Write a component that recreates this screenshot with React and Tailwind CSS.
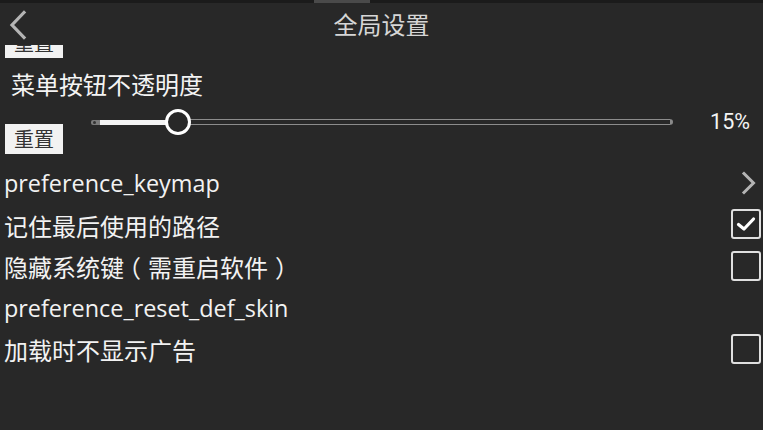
import React from "react";

const font = { fontFamily: '"Open Sans", "Noto Sans CJK SC", sans-serif' };
const cjk = { fontFamily: '"Noto Sans CJK SC", sans-serif' };

function Checkbox({ checked }) {
  return (
    <div className="w-[30px] h-[30px] border-2 border-[#e0e0e0] rounded-[3px] flex items-center justify-center -mt-[4px]">
      {checked && (
        <svg width="20" height="16" viewBox="0 0 20 16">
          <path d="M2.5 8.5 L8 13 L17.5 3" fill="none" stroke="#ffffff" strokeWidth="3.2" strokeLinecap="round" strokeLinejoin="round" />
        </svg>
      )}
    </div>
  );
}

function Row({ label, right, zh }) {
  return (
    <div className="h-[41.5px] flex items-center justify-between pl-[4px] pr-[2px]">
      {zh ? (
        <span className="text-[24px] text-[#f2f2f2] leading-none whitespace-nowrap -mt-[1px]" style={cjk}>{label}</span>
      ) : (
        <span className="text-[23.4px] text-[#f2f2f2] leading-none whitespace-nowrap -mt-[2px]">{label}</span>
      )}
      {right}
    </div>
  );
}

export default function App() {
  return (
    <div className="w-[763px] h-[430px] bg-[#282828] overflow-hidden flex flex-col" style={font}>
      <div className="h-[3px] bg-[#1b1b1b] flex">
        <div className="ml-[314px] w-[56px] h-[3px] bg-[#4a4a4a]" />
      </div>
      <div className="h-[42px] relative flex items-center justify-center">
        <svg className="absolute left-[8px] top-[7px]" width="20" height="30" viewBox="0 0 20 30">
          <path d="M16 2.5 L4 15 L16 27.5" fill="none" stroke="#b4b4b4" strokeWidth="3.2" strokeLinecap="square" />
        </svg>
        <span className="text-[24px] text-[#d6d6d6] leading-none" style={cjk}>全局设置</span>
      </div>
      <div className="h-[13px] overflow-hidden flex items-end pl-[5px]">
        <div className="w-[58px] h-[30px] shrink-0 bg-[#f2f2f2] flex items-center justify-center text-[20px] text-[#333] leading-none" style={cjk}>重置</div>
      </div>
      <div className="h-[50px] flex items-center pl-[11px]">
        <span className="text-[24px] text-[#f4f4f4] leading-none mt-[2px]" style={cjk}>菜单按钮不透明度</span>
      </div>
      <div className="flex items-start pl-[5px]">
        <div className="w-[58px] h-[30px] shrink-0 mt-[16px] bg-[#f2f2f2] flex items-center justify-center text-[20px] text-[#333] leading-none" style={cjk}>重置</div>
        <div className="ml-[28px] w-[582px] h-[28px] relative flex items-center">
          <div className="w-[9px] h-[5px] bg-[#7a7a7a] rounded-l-[2px] flex items-center pl-[2px]">
            <div className="w-[3px] h-[3px] bg-[#333] rounded-full" />
          </div>
          <div className="w-[78px] h-[5px] bg-[#f4f4f4]" />
          <div className="flex-1 h-[6px] border-y border-[#8c8c8c] rounded-r-[3px] border-r-[3px] border-r-[#8a8a8a]" />
          <div className="absolute left-[74px] top-[1px] w-[26px] h-[26px] rounded-full border-[3px] border-white bg-[#282828]" />
        </div>
        <div className="ml-auto pr-[13px] h-[28px] flex items-center">
          <span className="text-[21.5px] text-[#f4f4f4] leading-none" style={{ fontFamily: 'Roboto, sans-serif' }}>15%</span>
        </div>
      </div>
      <div className="mt-[10px] flex flex-col">
        <Row
          label="preference_keymap"
          right={
            <svg className="mr-[4px] -mt-[3px]" width="16" height="24" viewBox="0 0 16 24">
              <path d="M3 2.5 L12.5 12 L3 21.5" fill="none" stroke="#b4b4b4" strokeWidth="3" strokeLinecap="square" />
            </svg>
          }
        />
        <Row zh label="记住最后使用的路径" right={<Checkbox checked />} />
        <Row
          zh
          label={
            <>
              隐藏系统键<span className="inline-block w-[24px]"><span className="inline-block -translate-x-[7px]">（</span></span>需重启软件<span className="inline-block w-[24px]"><span className="inline-block translate-x-[7px]">）</span></span>
            </>
          }
          right={<Checkbox />}
        />
        <Row label="preference_reset_def_skin" />
        <Row zh label="加载时不显示广告" right={<Checkbox />} />
      </div>
    </div>
  );
}
